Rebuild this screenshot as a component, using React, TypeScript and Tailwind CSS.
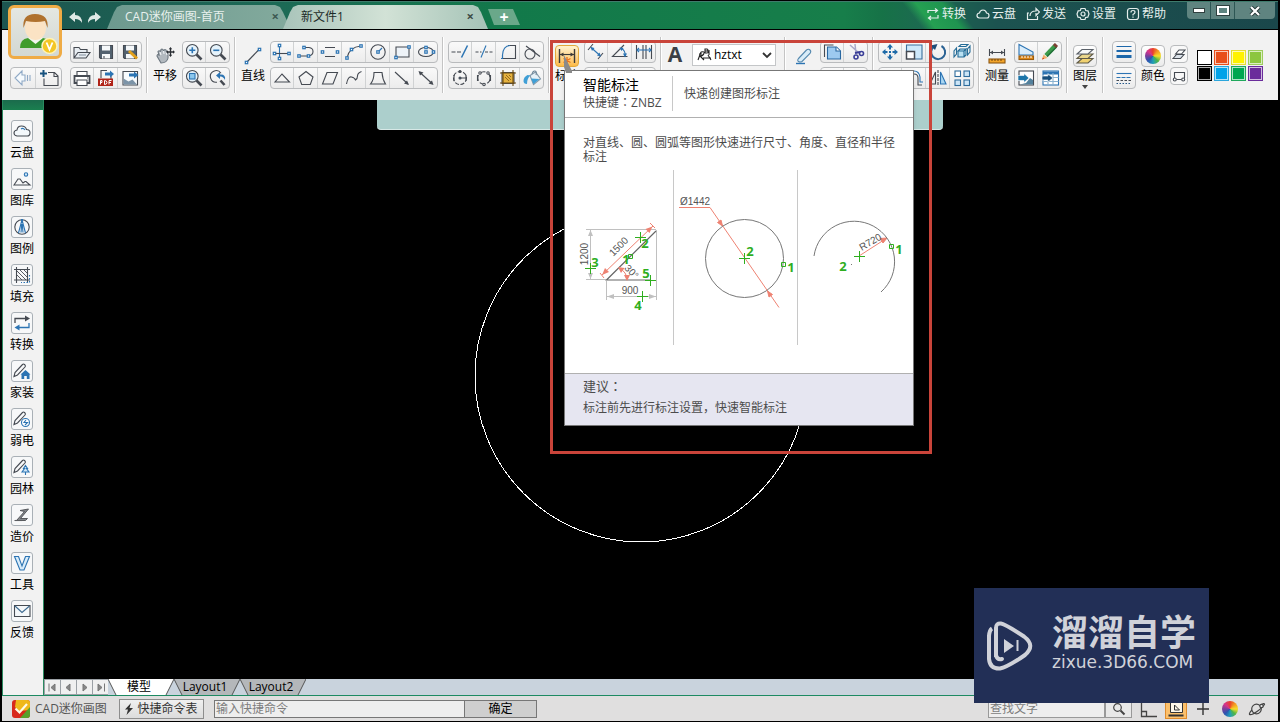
import type { ReactNode } from "react";

const D = "#454a52";
const B = "#2c74b3";
const L = "#cfe6f7";

function Svg({ w = 20, h = 18, children }: { w?: number; h?: number; children: ReactNode }) {
  return (
    <svg width={w} height={h} viewBox={`0 0 ${w} ${h}`} fill="none" stroke={D} strokeWidth="1.1" aria-hidden="true" className="block shrink-0">
      {children}
    </svg>
  );
}

function Node({ x, y }: { x: number; y: number }) {
  return <rect x={x - 1.2} y={y - 1.2} width="2.4" height="2.4" fill="#fff" stroke={B} strokeWidth="1.2" />;
}

function Lens() {
  return (
    <>
      <path d="M12.5 11.5l5 5" strokeWidth="2.6" />
      <circle cx="8.3" cy="7.3" r="5.8" fill="#e6f3fb" stroke={D} />
    </>
  );
}

const PENCIL = "M2 14.500l1-4L10.500 2.500q1-1 2 0l.5.5q.9 1 0 2L5.500 13z";

const icons: Record<string, ReactNode> = {
  back: <Svg><path d="M9 2L2 9l7 7v-4h3V6H9zM14.500 6v6M17 6v6" stroke="#8fa9c6" fill="#f6fafd" /></Svg>,
  newFile: <Svg><path d="M5 9.500v7h14V7l-3.500-3.500H9M15 3.500v4h4M6 16.500h12" fill="none" /><path d="M4.500 1v7M1 4.500h7" stroke="#17527f" strokeWidth="2" /></Svg>,
  open: <Svg><path d="M2 15V4.500h5l1.500 2H15v3M2 15l4-5.500h12L14 15z" fill="#e8edf2" /><path d="M7 12h7" stroke="#8a98a5" /></Svg>,
  save: <Svg><path d="M3.500 2.500h13v13h-12l-1-1z" fill="#52616f" /><path d="M6 2.500h8v5H6zM6 11h8v4.500H6z" fill="#f5f8fa" stroke="none" /><path d="M8 13v2.500" /></Svg>,
  saveAs: <Svg><path d="M3.500 2.500h13v13h-12l-1-1z" fill="#52616f" /><path d="M6 2.500h8v5H6zM6 11h8v4.500H6z" fill="#f5f8fa" stroke="none" /><path d="M9 8l8 7.500" stroke="#e3a11c" strokeWidth="3" /></Svg>,
  print: <Svg><path d="M5 7V2.500h10V7" fill="#fff" /><path d="M2.500 7h15v7h-15z" fill="#fff" strokeWidth="1.800" /><path d="M5 11h10v5.500H5z" fill="#fff" /><path d="M15 9h1" /></Svg>,
  pdf: <Svg><path d="M5 9V1.500h6M15 6v4" /><path d="M9 3.500h5V1.500l4 3.500-4 3.500v-2H9z" fill={B} stroke="none" /><rect x="2" y="9.500" width="15" height="7.500" fill="#b02318" stroke="none" /><path d="M4.500 15.500v-4h1.500v2H4.500M8.500 11.500v4q2.500 0 2.500-2t-2.500-2M13 15.500v-4h2.500M13 13.500h2" stroke="#fff" strokeWidth="1" /></Svg>,
  exportImg: <Svg><path d="M3 2.500h14.500v13.500H3z" fill="#f8fbfd" /><path d="M3.500 15.500v-6l5 3 4-2 4.500 5z" fill="#7c94a8" stroke="none" /><path d="M9 4.500h5V2.500l4.500 3.500L14 9.500v-2H9z" fill={B} stroke="none" /></Svg>,
  zoomIn: <Svg><Lens /><path d="M5.300 7.300h6M8.300 4.300v6" stroke={B} strokeWidth="1.600" /></Svg>,
  zoomOut: <Svg><Lens /><path d="M5.300 7.300h6" stroke={B} strokeWidth="1.600" /></Svg>,
  zoomWin: <Svg><Lens /><rect x="5.500" y="4.500" width="5.500" height="5.500" fill="#8cc8ee" stroke={B} /></Svg>,
  zoomPrev: <Svg><path d="M12.500 11.500l4 4.500" strokeWidth="2.600" /><path d="M9 13.200a5.800 5.800 0 1 1 4-9" /><path d="M17 11q1-6-5-5.500V3L8 6.500l4 3.500V7.500q3-.5 5 3.500z" fill={B} stroke="none" /></Svg>,
  cross: <Svg><path d="M7.500 2.500v13" stroke={B} /><path d="M2.500 10.500h14" /><Node x={7.5} y={2.5} /><Node x={2.5} y={10.5} /><Node x={17} y={10.5} /><Node x={7.5} y={15.5} /></Svg>,
  polyline: <Svg><path d="M8 4.500h5q4 .5 4 4t-4 4.500H3" /><Node x={8} y={4.5} /><Node x={3} y={13} /><Node x={12.5} y={13} /></Svg>,
  parallel: <Svg><path d="M5 4.500h10M5 13.500h10" /><Node x={2.5} y={9} /><Node x={17.5} y={9} /></Svg>,
  arc: <Svg><path d="M3 15Q5 4 17 3" /><Node x={3} y={15} /><Node x={7.5} y={6.5} /><Node x={17} y={3} /></Svg>,
  circle: <Svg><circle cx="10" cy="9" r="7.200" /><path d="M10 9l4-4" stroke={B} /><Node x={10} y={9} /></Svg>,
  rect: <Svg><path d="M4 4h13v10H4z" fill="#eef3f8" /><Node x={17} y={4} /><Node x={4} y={14.5} /></Svg>,
  ellipse: <Svg><ellipse cx="10" cy="9" rx="7.500" ry="4.500" /><Node x={10} y={9} /><Node x={10} y={4.5} /><Node x={17.5} y={9} /></Svg>,
  triangle: <Svg><path d="M3 13h14.500L10 5z" /></Svg>,
  pentagon: <Svg><path d="M10 2.500l7 5.500-2.700 7.500H5.700L3 8z" /></Svg>,
  parallelogram: <Svg><path d="M7 3.500h10.500L13 15H2.500z" /></Svg>,
  spline: <Svg><path d="M2.500 15Q4 7 7.500 8t4 3q2-1 2-4t4-4.500" /></Svg>,
  trapezoid: <Svg><path d="M6 3.500h8q.5 7 3.500 11.500h-15Q6 11 6 3.500z" /></Svg>,
  arrow: <Svg><path d="M3 3l13 12" /><path d="M17 16l-5-1.500 3-3z" fill={D} stroke="none" /></Svg>,
  arrows: <Svg><path d="M4 3.500l12 11" /><path d="M2.500 2l5 1.500-3.500 3zM17.500 16l-5-1.500 3.500-3z" fill={D} stroke="none" /></Svg>,
  extend: <Svg><path d="M1.500 9h10" strokeDasharray="4 1.500" /><path d="M17.500 2.500l-6 12" stroke={B} strokeWidth="1.600" /></Svg>,
  trim: <Svg><path d="M1.500 9h6M11 9h8" strokeDasharray="3 1.500" /><path d="M12 2.500l-5 12" stroke={B} /></Svg>,
  fillet: <Svg><path d="M10 2.500h7.500v13h-13V12" /><path d="M3 15.500h1.500V12Q5 3 12 2.500" stroke={B} /></Svg>,
  tangent: <Svg><circle cx="8" cy="11" r="5" /><path d="M4 3l14 10.500" /></Svg>,
  gear1: <Svg><circle cx="10" cy="9" r="6.500" strokeDasharray="4 1.500" /><path d="M10 9h6M4 6v6M16 6v6" /><circle cx="10" cy="9" r="1" fill={B} /><circle cx="10" cy="2.500" r="1" fill={D} /></Svg>,
  gear2: <Svg><circle cx="10" cy="9" r="6.200" strokeDasharray="6 2" /><path d="M3.500 6v6M16.500 6v6" /><circle cx="6" cy="4" r="1.200" fill="#fff" /><circle cx="14" cy="4" r="1.200" fill="#fff" /><circle cx="10" cy="15.500" r="1.200" fill="#fff" /></Svg>,
  hatch: <Svg><path d="M4 3.500h12v11H4z" fill="#e5b23e" /><path d="M5 1v16M15 1v16M2 4h16M2 14h16" stroke="#6b4a10" /><path d="M7 8l4 4M8 6l5 5M11 6l2 2" stroke="#8a611a" strokeWidth=".9" /></Svg>,
  bucket: <Svg><path d="M8 6.500l5.500-3.500 5 7-7 5.500z" fill="#e6f1f8" stroke="#8498a8" /><path d="M1.500 12q0-4 4-6l3 .5Q5 9 5 15q-3.500 0-3.500-3zM9 9.500l8.500.5-6 5z" fill="#3f9fd6" stroke="none" /><path d="M10 5q1-3.500 3-3t1 4" stroke="#6e879a" /></Svg>,
  dimLinear: <Svg><path d="M2.500 2v14M17.500 2v14" strokeWidth="1.400" /><path d="M3 6.500h14" stroke={B} /><path d="M3 6.500l3.500-2v4zM17 6.500l-3.500-2v4z" fill={B} stroke="none" /></Svg>,
  dimHot: <Svg><path d="M2.500 2v14M17.500 2v14" stroke="#3c3a38" strokeWidth="1.400" /><path d="M3 7.500h14" stroke="#3c3a38" /><path d="M3 7.500l3.500-2v4zM17 7.500l-3.500-2v4z" fill="#3c3a38" stroke="none" /><path d="M10 10v6M6.500 11.500l7 4M13.500 11.500l-7 4" stroke="#e9701c" strokeWidth="1.300" /></Svg>,
  dimAligned: <Svg><path d="M2 7l5-6M12 16l5-6" /><path d="M5 4.500l9 8" stroke={B} /><path d="M4.500 4l4 1-2.500 3zM15 13.500l-4-1 2.500-3z" fill={B} stroke="none" /></Svg>,
  dimAngle: <Svg><path d="M17.500 13.500h-15L14 2" /><path d="M11 5q5 3 4 8" stroke={B} /><path d="M9.500 4.500l4 .5-2 3zM15 14.500l-2-4h4z" fill={B} stroke="none" /></Svg>,
  dimChain: <Svg><path d="M2.500 2v14M9 2v14M17.500 2v14M12 2v14" /><path d="M3 7h14" stroke={B} /><path d="M5 5l-2 2 2 2M15 5l2 2-2 2" stroke={B} /></Svg>,
  eraser: <Svg><path d="M5.500 11.500l8-8.500q2-1.500 3.500 0t0 3.500L9 14.500q-2 1-3.500 0t0-3z" fill="#d8ecf8" stroke="#5488ae" /><path d="M3 16.500h9" stroke={B} strokeWidth="1.400" /></Svg>,
  copy: <Svg><path d="M2.500 14V2h9" /><path d="M5.500 4h9l4 4v8h-13z" fill="#9dcaf0" stroke="#2867a0" /><path d="M14 4v4h4" fill="#fff" stroke="#2867a0" /></Svg>,
  cut: <Svg><path d="M4 2l9 8M9 1l1 10" stroke="#a9a9c8" strokeWidth="1.500" /><circle cx="15.500" cy="10.500" r="2" stroke="#3b3f98" strokeWidth="1.600" /><circle cx="10" cy="14" r="2" stroke="#3b3f98" strokeWidth="1.600" /><path d="M9 10l5-1" stroke="#3b3f98" strokeWidth="2" /></Svg>,
  move: <Svg><path d="M10 1l3 3.500h-2v2H9v-2H7zM10 17l3-3.500h-2v-2H9v2H7zM2 9l3.500-3v2h2v2h-2v2zM18 9l-3.500-3v2h-2v2h2v2zM9 8h2v2H9z" fill="#1e6aa8" stroke="none" /></Svg>,
  scale: <Svg><path d="M2.500 9V2H18v14h-7" fill="#cde8fa" stroke="#3a6f9c" /><path d="M2.500 8.500h8v7.500h-8z" fill="#fff" strokeWidth="1.500" /></Svg>,
  rotate: <Svg><path d="M6 3.500A7 7 0 1 0 13.500 3" stroke="#2a6293" strokeWidth="2" /><path d="M2.500 2.500l7-1.500-2.500 6z" fill="#1f4d78" stroke="none" /></Svg>,
  explode: <Svg><path d="M6 8l2-2h6l-2 2zM6 8h6v6H6zM12 8l2-2v6l-2 2" fill="#b9e1f3" stroke="#256c97" /><path d="M2 14V8l2.500-3v6zM15.500 12V6L18 3v6zM7 3.500L9 1.500h7l-2 2z" stroke="#256c97" /></Svg>,
  offset: <Svg><path d="M2 16h4V9q0-4 4-4t4 4v7h4" /><path d="M4 13V8q1-6 6-6t6 6v5h3" stroke={B} /></Svg>,
  mirror: <Svg><path d="M10 1v16" strokeDasharray="3 1" /><path d="M7.500 3v12H2z" /><path d="M12.500 3v12H18z" fill="#a9d7f3" stroke={B} /></Svg>,
  array: <Svg><g fill="#cce5f7" stroke="#2e6c9c"><rect x="3" y="2" width="5.500" height="5.500" fill="#fff" /><rect x="12" y="2" width="5.500" height="5.500" /><rect x="3" y="11" width="5.500" height="5.500" /><rect x="12" y="11" width="5.500" height="5.500" /></g></Svg>,
  area: <Svg><path d="M3 11V1.500L17 9v3H3z" fill="#d9edfb" stroke={B} /><rect x="3" y="13" width="14.500" height="3.500" fill="#e08b1c" stroke="#9a5c10" /><path d="M6 13v2M9 13v2M12 13v2M15 13v2" stroke="#fff" strokeWidth="1" /></Svg>,
  pencil: <Svg><path d="M6 12.500L15 3" stroke="#3c9a4b" strokeWidth="4.500" /><path d="M7 13.500L16.500 4" stroke="#23703a" strokeWidth="1.500" /><path d="M14.500 3.500l2-2" stroke="#7b4034" strokeWidth="4.500" /><path d="M2 16.500l1.500-5 4 3.500z" fill="#f1b069" stroke="none" /><path d="M2 16.500l1-2 1.200 1.200z" fill="#d43318" stroke="none" /></Svg>,
  insertImg: <Svg><rect x="3" y="2" width="14.500" height="14" fill="#fff" /><path d="M10 14l4-5 3 2v4.500H4z" fill="#52809c" stroke="none" /><path d="M2 6.500h6v-2L13 9l-5 4.500v-2H2z" fill="#1d76aa" stroke="#fff" strokeWidth=".6" /></Svg>,
  insertTable: <Svg><rect x="3" y="2" width="15.500" height="14" fill="#fff" stroke={B} /><path d="M3 4h15.500" stroke={B} strokeWidth="3" /><path d="M3 8.500h15.500M3 12.500h15.500M8 4v12M13 4v12" stroke="#8ab2d0" /><path d="M2 7h6V5l5 4-5 4v-2H2z" fill="#174f7c" stroke="#fff" strokeWidth=".6" /></Svg>,
  lineWidth: <Svg><path d="M2.500 3.500h15" stroke="#1c67aa" strokeWidth="1" /><path d="M2.500 8h15" stroke="#1c67aa" strokeWidth="2" /><path d="M2.500 13.500h15" stroke="#1c67aa" strokeWidth="3" /></Svg>,
  lineType: <Svg><path d="M2.500 4.500h15" stroke={B} /><path d="M2.500 8.500h15" strokeDasharray="4 1" stroke={B} /><path d="M2.500 11.500h15" strokeDasharray="2.500 1.500" /><path d="M2.500 14.500h15" strokeDasharray="1.500 1.500" stroke="#285a8a" /></Svg>,
  hand: <Svg><path d="M6 16l-4-7q0-2 2-1L3 4.500Q4 3 5.500 4.500L6 2.500q1.500-1 2.500 1l1.500-1q1.500 0 1.500 2l1.500 1.500V11q-1 5-7 5z" fill="#b2b9bf" stroke="#6d7780" /><path d="M6 8l-1-3M9 7L8.500 4M12 8l-1-3" stroke="#eef1f4" /><path d="M15.500 2v6M12.500 5h6" stroke="#2b2f35" strokeWidth="1.300" /><path d="M15.500 0l1.700 2.200h-3.400zM15.500 10l1.700-2.200h-3.400zM20 5l-2-1.700v3.400zM11 5l2-1.700v3.400z" fill="#2b2f35" stroke="none" /></Svg>,
  line: <Svg><path d="M3.500 15.500L16 2.500" /><Node x={3.5} y={15.5} /><Node x={16.5} y={2.5} /></Svg>,
  measure: <Svg><path d="M2.500 2v7M17.500 2v7M3 5.500h14" /><path d="M3 5.500l3-2v4zM17 5.500l-3-2v4z" fill={D} stroke="none" /><rect x="2" y="12" width="16" height="4" fill="#f2a42a" stroke="#8f5812" /><path d="M5 12v2M8 12v2M11 12v2M14 12v2" stroke="#70420a" strokeWidth="1" /></Svg>,
  layers: <Svg><path d="M2 16l5-4.500h11L13 16z" fill="#f0d170" stroke="#5f5a48" /><path d="M2 11.500L7 7h11l-5 4.500z" fill="#ead68c" stroke="#5f5a48" /><path d="M2 7l5-4.500h11L13 7z" fill="#f8f9fa" stroke="#5a6068" /></Svg>,
  smallLayers: <Svg w={14} h={14}><path d="M1 11.500l3.500-4H12l-3.500 4z" fill="#dce3ea" /><path d="M3.500 7L7 3h6L9.500 7z" fill="#fff" /></Svg>,
  smallShape: <Svg w={14} h={14}><path d="M2.500 9V3.500h10V9M4.500 10.500h5" /><circle cx="2.800" cy="10.500" r="1.500" fill="#fff" /><circle cx="11.200" cy="10.500" r="1.500" fill="#fff" /></Svg>,
  cloud: <Svg><path d="M5 14q-3-.5-3-3t3-3q.5-4 4.500-4t5 3.500q3.500 0 3.500 3.300T15 14z" fill="#f3f8fb" /><path d="M9 7q2-1.500 4 1" stroke={B} /></Svg>,
  gallery: <Svg><path d="M2 15l4-6h2l3 4 2-1.500h1L18 15z" /><circle cx="14" cy="4.500" r="1.700" stroke={B} fill={L} /></Svg>,
  legend: <Svg><circle cx="10" cy="9" r="7.200" /><path d="M6.500 15L9.700 3M13.500 15L10.300 3M9 14.500L9.800 6M11 14.500L10.200 6M9.500 1.500h1v2h-1z" stroke={B} /></Svg>,
  fill: <Svg><path d="M4.500 1v16M15.500 1v16M2 3.500h16M2 14h16" /><path d="M5 5l9 9M8 4l7 7M5 9l5 5M12 4l3 3" strokeWidth=".9" /><path d="M17.500 9v7.500H9" stroke={B} strokeDasharray="1.500 1.500" /></Svg>,
  convert: <Svg><path d="M3 9V4.500h11" strokeWidth="1.300" /><path d="M18 4.500l-5-3v6z" fill={D} stroke="none" /><path d="M17 9v4.500H7" stroke={B} strokeWidth="1.300" /><path d="M2.500 13.500l5-3v6z" fill={B} stroke="none" /></Svg>,
  home: <Svg><path d={PENCIL} /><path d="M8.500 12.500L13.500 8l5 4.500h-1V17h-2.700v-3h-2.600v3H9.500v-4.500z" fill={B} stroke="none" /></Svg>,
  power: <Svg><path d={PENCIL} /><circle cx="13.500" cy="12.500" r="4" fill="#fff" stroke={B} /><path d="M14 10l-2 2.500h3.500L13 15" stroke={B} /></Svg>,
  garden: <Svg><path d={PENCIL} /><path d="M13.500 7.500l2 3h-1l2.500 3.500h-7l2.500-3.500h-1zM13.500 14v3" stroke={B} fill={L} /></Svg>,
  cost: <Svg><path d="M8 4.500L16.500 3 8.500 12.500h7l-2 2H4.500l8-9z" fill="#85888c" stroke="#4c4e52" strokeWidth=".9" /><path d="M2.500 14.500h8" stroke="#5a5c60" /></Svg>,
  tools: <Svg><path d="M2.500 2.500h4L10 12l3.500-9.500h4L12 16H8z" fill="#d8ecfa" stroke={B} /></Svg>,
  mail: <Svg><path d="M2.500 3.500h15.500v11H2.500z" fill="#f4f7f9" /><path d="M3 4l7 6.500L17.500 4" stroke="#3d6b91" /></Svg>,
};

function Cells({ rows, wide = false }: { rows: [string, string][][]; wide?: boolean }) {
  return (
    <div className="flex shrink-0 flex-col gap-1">
      {rows.map((row, i) => (
        <div key={i} className="flex divide-x divide-[#d0d2d3] rounded-sm bg-gradient-to-b from-[#fafafa] to-[#ebebeb] outline outline-1 -outline-offset-1 outline-[#b9bbbd]">
          {row.map(([icon, label]) => (
            <button key={icon} type="button" aria-label={label} className={wide ? "flex h-[22px] w-[26px] items-center justify-center" : "flex h-[22px] w-6 items-center justify-center"}>
              {icons[icon]}
            </button>
          ))}
        </div>
      ))}
    </div>
  );
}

function Sep() {
  return <div className="-my-1 w-[2px] shrink-0 self-stretch border-l border-[#c4c4c4] bg-white" />;
}

function Big({ icon, label, look = "plain", arrow = false, iconOnly = false }: { icon: ReactNode; label: string; look?: "plain" | "box" | "hot"; arrow?: boolean; iconOnly?: boolean }) {
  const looks = {
    plain: "flex h-[22px] w-6 items-center justify-center",
    box: "flex h-[22px] w-6 items-center justify-center rounded-sm border border-[#b9bbbd] bg-gradient-to-b from-white to-[#ebebeb]",
    hot: "flex h-[22px] w-6 items-center justify-center rounded-sm border border-[#e2a93c] bg-gradient-to-b from-[#fff3cf] to-[#fdbb45]",
  };
  return (
    <button type="button" aria-label={label} className="flex w-[26px] shrink-0 flex-col items-center pt-1 text-black">
      <span className={looks[look]}>{icon}</span>
      {!iconOnly && <span className="text-xs leading-[18px] whitespace-nowrap">{label}</span>}
      {arrow && <svg width="6" height="4" className="block" aria-hidden="true"><path d="M0 0h6L3 4z" fill="#444" /></svg>}
    </button>
  );
}

function ColorWheel() {
  return <span className="block h-4 w-4 rounded-full bg-[conic-gradient(#e8402c,#f59a23,#f5df2b,#4fb54a,#1f9fb8,#2b56b0,#7a3f9c,#d8348a,#e8402c)]" />;
}

const titleActions: [string, ReactNode][] = [
  ["转换", <path key="p" d="M2 6V3.500h9M9 1.500l2.500 2L9 5.500M12 8v3H3M5 9L2.500 11 5 13" />],
  ["云盘", <path key="p" d="M3.500 11q-2.500-.3-2.500-2.500T3.500 6Q4 3 7 3t3.500 3q2.500 0 2.500 2.500T11 11z" />],
  ["发送", <path key="p" d="M3 6H1.500v6.500h10V9M4 9q0-5 6-5V1.500L13.500 5 10 8.500V6" />],
  ["设置", <g key="p"><path d="M5 1.500h4l.8 2 2.200.3L13 7l-1.200 3.200-2.200.3-.6 2H5l-.8-2-2.200-.3L1 7l1.200-3.200 2.200-.3z" /><circle cx="7" cy="7" r="2" /></g>],
  ["帮助", <g key="p"><rect x="1.500" y="1.500" width="11" height="11" rx="2.500" /><path d="M5 5.500Q5 3.500 7 3.500t2 1.800Q9 6.500 7 7.500v1M7 9.500v1.300" /></g>],
];

const sideItems: [string, string][] = [
  ["cloud", "云盘"], ["gallery", "图库"], ["legend", "图例"], ["fill", "填充"], ["convert", "转换"], ["home", "家装"],
  ["power", "弱电"], ["garden", "园林"], ["cost", "造价"], ["tools", "工具"], ["mail", "反馈"],
];

const swatches: [string, string][] = [
  ["白", "bg-white border-black"], ["红", "bg-[#e84e1b] border-[#e84e1b]"], ["黄", "bg-[#fff200] border-[#e6dc30]"], ["浅绿", "bg-[#8cc63f] border-[#9ccc5c]"],
  ["黑", "bg-black border-black"], ["蓝", "bg-[#00a2e8] border-[#2ba6dc]"], ["绿", "bg-[#00a651] border-[#1fa85c]"], ["紫", "bg-[#6a2c9b] border-[#6a2c9b]"],
];

function Avatar() {
  return (
    <button type="button" aria-label="用户" className="absolute top-1 left-[6px] z-10 h-[54px] w-[54px] rounded-md border-[3px] border-[#efab45] bg-gradient-to-b from-[#e4e7e2] to-[#d3d8d2]">
      <svg viewBox="0 0 48 48" className="block h-full w-full" aria-hidden="true">
        <path d="M9 40q0-9 8-10h15q8 1 8 10z" fill="#3f9c2c" />
        <path d="M17 30l7.500 6 7.500-6-3-2h-9z" fill="#f3f6ef" />
        <ellipse cx="24.500" cy="20" rx="10.500" ry="12" fill="#fbe3c4" />
        <path d="M12.500 20Q11 6 24 6q14 0 12.500 14l-2.500-7q-9 2-19 0z" fill="#b0722e" />
        <circle cx="38.500" cy="38" r="7.500" fill="#f3c626" stroke="#fff3b8" strokeWidth="1.500" />
        <path d="M35.500 34.500l3 7 3-7" fill="none" stroke="#fff" strokeWidth="1.800" />
      </svg>
    </button>
  );
}

function TitleBar() {
  return (
    <header className="flex h-[29px] shrink-0 items-end border-t border-b border-t-[#3f7b6c] border-b-black bg-[linear-gradient(52deg,transparent_0_71%,#25a052_72%,#1f9450_74%,transparent_75%),linear-gradient(90deg,#1d5550_0%,#1c6a55_22%,#12794a_40%,#177e4a_66%,#167247_69%,#1c6a50_72%,#1c5350_78%,#1a474b_100%)] pl-[66px]">
      <div className="flex h-full items-center gap-1 pt-1">
        <button type="button" aria-label="撤销"><svg width="15" height="14" className="block" aria-hidden="true"><path d="M1 6l6-5v3q7 0 7 8-2-4-7-4v3z" fill="#dfe9e6" /></svg></button>
        <button type="button" aria-label="重做"><svg width="15" height="14" className="block" aria-hidden="true"><path d="M14 6L8 1v3Q1 4 1 12q2-4 7-4v3z" fill="#dfe9e6" /></svg></button>
      </div>
      <nav className="ml-[5px] flex h-6 items-stretch">
        <a href="#home" className="flex w-[184px] items-center justify-between bg-gradient-to-r from-[#6d9a8f] to-[#83aa9d] pr-3 pl-[18px] text-xs whitespace-nowrap text-[#e8f1ee] [clip-path:polygon(0_100%,7px_30%,10px_8%,15px_0,168px_0,173px_8%,176px_30%,184px_100%)]">
          CAD迷你画图-首页
          <span className="text-[13px] font-bold text-[#3c5952]">×</span>
        </a>
        <a href="#file" className="-ml-2 flex w-[205px] items-center justify-between bg-gradient-to-r from-[#a9c4ba] via-[#d2e2d6] to-[#a5c3b7] pr-[14px] pl-[18px] text-xs whitespace-nowrap text-[#1d2b28] [clip-path:polygon(0_100%,7px_30%,10px_8%,15px_0,190px_0,195px_8%,198px_30%,205px_100%)]">
          新文件1
          <span className="text-[13px] font-bold text-[#3c4b46]">×</span>
        </a>
        <button type="button" aria-label="新建" className="mt-1 mb-1 flex w-8 items-center justify-center bg-[#6aa88a] pb-px text-base leading-none font-bold text-white [clip-path:polygon(0_0,25px_0,100%_100%,6px_100%)]">
          +
        </button>
      </nav>
      <div className="ml-auto flex h-full items-center gap-[10px] pb-1">
        {titleActions.map(([label, shape]) => (
          <button key={label} type="button" className="flex items-center gap-0.5 text-xs text-[#e4eeec]">
            <svg width="14" height="14" viewBox="0 0 14 14" fill="none" stroke="#e4eeec" strokeWidth="1.200" aria-hidden="true">{shape}</svg>
            {label}
          </button>
        ))}
      </div>
      <div className="mr-[3px] ml-[21px] flex h-[17px] divide-x divide-[#2d5654] self-start rounded-b bg-[#5f8480]">
        <button type="button" aria-label="最小化" className="flex w-6 items-center justify-center"><span className="h-[5px] w-3 border border-[#30403f] bg-white" /></button>
        <button type="button" aria-label="最大化" className="flex w-6 items-center justify-center"><span className="h-[9px] w-3 border-2 border-white outline outline-1 outline-[#30403f]" /></button>
        <button type="button" aria-label="关闭" className="flex w-10 items-center justify-center"><svg width="12" height="10" aria-hidden="true"><path d="M2 1l8 8M10 1L2 9" stroke="#263636" strokeWidth="4" /><path d="M2 1l8 8M10 1L2 9" stroke="#fff" strokeWidth="2.200" /></svg></button>
      </div>
    </header>
  );
}

function Toolbar() {
  return (
    <div className="flex h-[70px] shrink-0 gap-1 overflow-hidden bg-[#f2f2f2] pt-[11px] pb-[11px] pl-2">
      <div className="mr-1 flex items-end"><Cells wide rows={[[["back", "返回"], ["newFile", "新建"]]]} /></div>
      <Cells rows={[[["open", "打开"], ["save", "保存"], ["saveAs", "另存为"]], [["print", "打印"], ["pdf", "输出 PDF"], ["exportImg", "输出图片"]]]} />
      <Sep />
      <Big icon={icons.hand} label="平移" />
      <Cells rows={[[["zoomIn", "放大"], ["zoomOut", "缩小"]], [["zoomWin", "窗口缩放"], ["zoomPrev", "上一视图"]]]} />
      <Sep />
      <Big icon={icons.line} label="直线" />
      <Cells
        rows={[
          [["cross", "构造线"], ["polyline", "多段线"], ["parallel", "双线"], ["arc", "圆弧"], ["circle", "圆"], ["rect", "矩形"], ["ellipse", "椭圆"]],
          [["triangle", "三角形"], ["pentagon", "多边形"], ["parallelogram", "平行四边形"], ["spline", "样条线"], ["trapezoid", "梯形"], ["arrow", "箭头"], ["arrows", "双箭头"]],
        ]}
      />
      <Sep />
      <Cells rows={[[["extend", "延伸"], ["trim", "修剪"], ["fillet", "圆角"], ["tangent", "切线"]], [["gear1", "等分"], ["gear2", "测量点"], ["hatch", "填充"], ["bucket", "油漆桶"]]]} />
      <Sep />
      <Big icon={icons.dimHot} label="标注" look="hot" />
      <Cells rows={[[["dimAligned", "对齐标注"], ["dimAngle", "角度标注"], ["dimChain", "连续标注"]], [["gear1", "直径"], ["dimLinear", "线性"], ["arc", "弧长"]]]} />
      <Sep />
      <button type="button" aria-label="文字" className="w-[22px] shrink-0 self-start pt-px pr-1 text-[21px] leading-6 font-bold text-[#3c4046]">A</button>
      <div className="mr-1 flex w-[84px] shrink-0 flex-col gap-1 pt-[3px]">
        <div className="flex h-[22px] items-center border border-[#c4c6c8] bg-white pl-1">
          <svg width="15" height="14" viewBox="0 0 15 14" fill="none" stroke="#222" strokeWidth="1.100" aria-hidden="true">
            <path d="M1 12l3-8M4 4q4-1 3 1.500T3 8l4 4M2 6h3M8 5V1h2q2 1 0 2H8M10 3q3 1 0 2H8M12 2v5M6 10h8M11 7l3 5" />
          </svg>
          <select aria-label="字体" className="h-full min-w-0 flex-1 appearance-none bg-transparent pl-0.5 text-xs leading-5 text-black"><option>hztxt</option></select>
          <svg width="15" height="10" viewBox="0 0 15 10" aria-hidden="true"><path d="M3 3l4 4 4-4" fill="none" stroke="#333" strokeWidth="1.800" /></svg>
        </div>
        <div className="h-[22px] border border-[#c4c6c8] bg-white" />
      </div>
      <Sep />
      <Big icon={icons.eraser} label="删除" iconOnly />
      <Cells rows={[[["copy", "复制"], ["cut", "剪切"]], [["open", "粘贴"], ["save", "块"]]]} />
      <Sep />
      <Cells rows={[[["move", "移动"], ["scale", "缩放"], ["rotate", "旋转"], ["explode", "分解"]], [["fillet", "倒角"], ["offset", "偏移"], ["mirror", "镜像"], ["array", "阵列"]]]} />
      <Sep />
      <Big icon={icons.measure} label="测量" />
      <Cells rows={[[["area", "面积"], ["pencil", "画笔"]], [["insertImg", "插入图片"], ["insertTable", "插入表格"]]]} />
      <Sep />
      <Big icon={icons.layers} label="图层" look="box" arrow />
      <Sep />
      <div className="ml-1"><Cells rows={[[["lineWidth", "线宽"]], [["lineType", "线型"]]]} /></div>
      <Big icon={<ColorWheel />} label="颜色" look="box" />
      <div className="flex shrink-0 flex-col gap-1 pt-1">
        {[["smallLayers", "随层"], ["smallShape", "随块"]].map(([icon, label]) => (
          <button key={icon} type="button" aria-label={label} className="flex h-[18px] w-[18px] items-center justify-center rounded-sm border border-[#b9bbbd] bg-[#f8f8f8]">{icons[icon]}</button>
        ))}
      </div>
      <div className="ml-[5px] grid shrink-0 grid-cols-[repeat(4,15px)] grid-rows-[repeat(2,15px)] gap-x-0.5 gap-y-px self-start pt-[9px]">
        {swatches.map(([label, color]) => (
          <button key={label} type="button" aria-label={label} className={"border shadow-[inset_0_0_0_1px_#ffffffb0] " + color} />
        ))}
      </div>
    </div>
  );
}

function Cross({ x, y }: { x: number; y: number }) {
  return <path d={`M${x - 5} ${y + 0.5}h11M${x + 0.5} ${y - 5}v11`} stroke="#2fae1f" />;
}

function Num({ x, y, n }: { x: number; y: number; n: string }) {
  return <text x={x} y={y} textAnchor="middle" className="fill-[#2fae1f] text-[13px] font-bold" stroke="none" dominantBaseline="central">{n}</text>;
}

function DimensionDrawings() {
  const red = "#ee8272";
  const gray = "#c0c0c0";
  return (
    <svg viewBox="565 169 348 175" className="block w-full" fill="none" strokeWidth="1" aria-hidden="true" fontFamily="'Open Sans', sans-serif">
      <path d="M673.500 169v175M797.500 169v175" stroke="#c8c8c8" />
      <g stroke={gray}>
        <path d="M586 228.500h70M590.500 229v49M586 278.500h20M656.500 229v70M606.500 280v19M607 295.500h49" />
        <path d="M590.500 229l-2.500 6h5zM590.500 278l-2.500-6h5zM607 295.500l7-2.500v5zM656 295.500l-7-2.500v5z" fill={gray} stroke="none" />
      </g>
      <path d="M656 230l-49.500 49H650" stroke="#666" strokeWidth="1.200" />
      <g stroke={red}>
        <path d="M602 274l51-49M600 272l4 5M650 222l5 5M619 267q8 4 8 12" />
        <path d="M602 274l3-7 4 4zM652.500 225.500l-7 2.500 4 4zM618 266l6.500 1-3.500 5zM627 280l-3-6h6z" fill={red} stroke="none" />
        <path d="M679 206.500h31l69 100" />
        <path d="M722.500 225l-5-3.500 3.500-2.500zM767.500 290l5 3.500-3.500 2.500zM887 237l-4 5-3-4.500z" fill={red} />
        <path d="M859 255l28-18" />
      </g>
      <circle cx="744.500" cy="257.500" r="39" stroke="#777" />
      <path d="M814 255A40.500 40.500 0 1 1 881 291" stroke="#777" />
      <g className="fill-[#555] text-[10px]" textAnchor="middle" fontFamily="'Liberation Sans', sans-serif">
        <text transform="translate(588 253) rotate(-90)">1200</text>
        <text transform="translate(621 248) rotate(-45)">1500</text>
        <text transform="translate(629 273) rotate(47)">30°</text>
        <text x="630" y="293">900</text>
        <text x="695" y="204">Ø1442</text>
        <text transform="translate(872 244) rotate(-30)">R720</text>
      </g>
      <Cross x={640} y={236} /><Cross x={590} y={267} /><Cross x={650} y={279} /><Cross x={642} y={295} /><Cross x={744} y={257} /><Cross x={859} y={255} />
      <path d="M628.500 253.500h4v4h-4zM781.500 261.500h4v4h-4zM889.500 243.500h4v4h-4z" stroke="#2fae1f" />
      <Num x={645} y={242} n="2" /><Num x={626} y={258} n="1" /><Num x={595} y={261} n="3" /><Num x={646} y={272} n="5" /><Num x={638} y={304} n="4" />
      <Num x={750} y={250} n="2" /><Num x={791} y={266} n="1" /><Num x={843} y={265} n="2" /><Num x={899} y={248} n="1" />
      <path d="M851 263.500h1" stroke="#777" />
    </svg>
  );
}

function Colon() {
  return <span className="font-['Noto_Sans_CJK_JP',sans-serif]">：</span>;
}

function DimensionTooltip() {
  return (
    <section className="absolute top-[69px] left-[562px] z-20 w-[350px] border border-[#777] bg-white text-xs text-[#4c4c4c] shadow-md">
      <svg width="12" height="18" className="absolute -top-[16px] -left-1" aria-hidden="true"><path d="M3 0l8 16v2H5L3 12z" fill="#8a8a8a" /></svg>
      <div className="flex items-center border-b border-[#b0b0b0] pt-[5px] pb-[6px] pl-[18px]">
        <div className="flex w-[90px] flex-col border-r border-[#c8c8c8]">
          <h2 className="text-sm leading-[18px] text-black">智能标注</h2>
          <p className="leading-4 whitespace-nowrap">快捷键<Colon />ZNBZ</p>
        </div>
        <p className="pl-[11px]">快速创建图形标注</p>
      </div>
      <p className="px-[18px] pt-[18px] pb-[6px] leading-[14px]">对直线、圆、圆弧等图形快速进行尺寸、角度、直径和半径标注</p>
      <DimensionDrawings />
      <footer className="mt-7 border-t border-[#b0b0b0] bg-[#e6e6f1] px-[18px] pt-px pb-[6px]">
        <h3 className="text-[13px] leading-[22px]">建议<Colon /></h3>
        <p className="leading-[22px]">标注前先进行标注设置，快速智能标注</p>
      </footer>
    </section>
  );
}

function LayoutTab({ label, active = false }: { label: string; active?: boolean }) {
  return (
    <a href={"#" + label} className="relative flex w-[66px] justify-center pr-1">
      <svg width="66" height="16" className="absolute inset-0" aria-hidden="true">
        <path d="M0 0h66l-8 16H8z" fill={active ? "#ffffff" : "#b4b7ba"} />
        <path d="M0 0l8 16M66 0l-8 16" stroke="#555" fill="none" />
      </svg>
      <span className="relative">{label}</span>
    </a>
  );
}

function LayoutTabs() {
  return (
    <div className="flex h-4 shrink-0 bg-[#c9d3dd] text-xs leading-4 text-black">
      <div className="flex gap-px bg-[#9ba0a5] p-px pr-0">
        {[["首个", "M3 2.500v8M9 3L5 6.500l4 3.500z"], ["上一个", "M8 3L4 6.500 8 10z"], ["下一个", "M5 3l4 3.500L5 10z"], ["末个", "M4 3l4 3.500L4 10zM10.500 2.500v8"]].map(([label, d]) => (
          <button key={label} type="button" aria-label={label} className="flex w-[15px] items-center justify-center bg-[#f0f0f0]">
            <svg width="13" height="13" aria-hidden="true"><path d={d} fill="#888" stroke="#777" /></svg>
          </button>
        ))}
      </div>
      <LayoutTab label="模型" active />
      <LayoutTab label="Layout1" />
      <LayoutTab label="Layout2" />
    </div>
  );
}

function StatusBar() {
  return (
    <footer className="flex h-[25px] shrink-0 items-center bg-[#e0dfdf] pr-[10px] pl-[10px] text-xs text-[#555]">
      <svg width="18" height="18" viewBox="0 0 18 18" aria-hidden="true">
        <rect width="18" height="18" rx="3" fill="#d8291c" />
        <path d="M4 0h11q3 0 3 3v7L7 11 3 7z" fill="#efb81a" />
        <path d="M8 18h7q3 0 3-3V7z" fill="#58a02b" />
        <path d="M3.500 8.500l4 4L15 4" fill="none" stroke="#fffbe8" strokeWidth="2.200" />
      </svg>
      <span className="ml-[5px] w-[84px] whitespace-nowrap">CAD迷你画图</span>
      <button type="button" className="flex h-5 w-[85px] items-center justify-center gap-1 border border-[#8d8d8d] bg-gradient-to-b from-[#f0f0f0] to-[#dcdcdc] whitespace-nowrap text-[#333]">
        <svg width="8" height="12" aria-hidden="true"><path d="M6 0L0 6.500h3L1.500 12 8 5H4.500z" fill="#333" /></svg>
        快捷命令表
      </button>
      <input aria-label="输入快捷命令" placeholder="输入快捷命令" className="ml-[10px] h-[18px] w-[250px] border border-r-0 border-[#777] bg-[#eee] pl-px text-xs placeholder:text-[#7d7d7d]" />
      <button type="button" className="h-[18px] w-[73px] border border-[#777] bg-[#cfcfcf] leading-4 text-black">确定</button>
      <div className="ml-auto flex items-center">
        <input aria-label="查找文字" placeholder="查找文字" className="h-[18px] w-[117px] border border-[#999] bg-[#eee] pl-px text-xs placeholder:text-[#7d7d7d]" />
        <button type="button" aria-label="查找" className="flex h-[18px] w-[27px] items-center justify-center border border-[#999] bg-[#e8e8e8]">
          <svg width="14" height="14" fill="none" stroke="#444" aria-hidden="true"><circle cx="5.500" cy="5.500" r="3.800" strokeWidth="1.200" /><path d="M8.500 8.500l4 4" strokeWidth="2" /></svg>
        </button>
        <div className="ml-[6px] flex items-center gap-[5px]">
          <button type="button" aria-label="正交" className="flex w-[22px] justify-center"><svg width="18" height="18" fill="none" stroke="#444" strokeWidth="1.300" aria-hidden="true"><path d="M1.500 1v15.500H17M1.500 11.500h5v5" /></svg></button>
          <button type="button" aria-label="捕捉" className="flex h-5 w-[22px] items-center justify-center border border-[#e08c2c] bg-[#fbc06c]"><svg width="18" height="18" fill="none" stroke="#333" aria-hidden="true"><path d="M3.500 1v11.500h12V1" fill="#fff8ea" /><path d="M7.500 5v5h5z" /><path d="M1.500 15.500h15" strokeWidth="2" /></svg></button>
          <button type="button" aria-label="十字" className="flex w-[22px] justify-center"><svg width="14" height="14" stroke="#333" strokeWidth="1.400" aria-hidden="true"><path d="M1 7h12M7 1v12" /></svg></button>
          <button type="button" aria-label="颜色" className="flex w-[22px] justify-center"><ColorWheel /></button>
          <button type="button" aria-label="轨道" className="flex w-[22px] justify-center"><svg width="18" height="16" fill="none" stroke="#444" strokeWidth="1.200" aria-hidden="true"><circle cx="8.500" cy="8" r="4.800" /><path d="M4 9q-3 3-2.500 4.500 2 1 7.500-3T16.500 3.500q0-2-4 .5" /><circle cx="13.500" cy="5" r="1.700" fill="#eee" /></svg></button>
        </div>
      </div>
    </footer>
  );
}

export default function App() {
  return (
    <div className="relative flex h-screen min-h-[640px] flex-col overflow-hidden border-x-2 border-t border-b border-black bg-black font-['Open_Sans','Noto_Sans_CJK_SC',sans-serif]">
      <TitleBar />
      <Toolbar />
      <Avatar />
      <div className="flex min-h-0 flex-1">
        <aside className="w-[42px] shrink-0 border-x border-[#2a8a60] bg-[#f2f2f2]">
          <div className="h-[10px] bg-gradient-to-b from-[#1b6b4c] to-[#1a7f4f]" />
          <nav className="flex flex-col items-center gap-1 pt-[10px] pr-0.5">
            {sideItems.map(([icon, label]) => (
              <a key={icon} href={"#" + icon} className="flex h-11 flex-col items-center text-xs text-black">
                <span className="flex h-[22px] w-[22px] items-center justify-center rounded-[3px] border border-[#a9b0b6] bg-[#f7f8f9]">{icons[icon]}</span>
                <span className="leading-[22px]">{label}</span>
              </a>
            ))}
          </nav>
        </aside>
        <main className="flex min-w-0 flex-1 flex-col">
          <div className="relative min-h-0 flex-1 bg-black">
            <div className="pr-0.5">
              <div className="mx-auto h-[30px] w-[566px] rounded-b-sm border-b border-[#d7e8e6] bg-[#accfcc]" />
            </div>
            <svg width="334" height="334" className="absolute top-[109px] left-[430px]" aria-hidden="true" shapeRendering="crispEdges">
              <circle cx="167" cy="167" r="166" fill="none" stroke="#fff" />
            </svg>
          </div>
          <LayoutTabs />
        </main>
      </div>
      <div className="h-px shrink-0 bg-[#1d8a62]" />
      <StatusBar />
      <DimensionTooltip />
      <div className="pointer-events-none absolute top-[39px] left-[548px] z-30 h-[414px] w-[382px] border-[3px] border-[#c9443a]" />
      <aside className="absolute right-[69px] bottom-[18px] z-30 flex h-[115px] w-[235px] items-center gap-[18px] bg-[#222f56] pl-[12px] text-[#d0d2d9]">
        <svg width="48" height="50" viewBox="0 0 48 50" fill="none" stroke="#d0d2d9" aria-hidden="true">
          <path d="M10 36V7q0-5 5-4.500 4 .5 23 13 12 9 1 18.500Q22 46 14 47.500 4 48 3 38V15q.5-6 3-7.500" strokeWidth="4" />
          <path d="M10 34q1 5 6 4" strokeWidth="4" strokeLinecap="round" />
          <path d="M18 18l10 7-10 7z" fill="#d0d2d9" stroke="none" />
          <path d="M31.500 19v11" strokeWidth="2" />
        </svg>
        <div className="pb-1">
          <p className="text-4xl leading-[36px] font-bold whitespace-nowrap">溜溜自学</p>
          <p className="font-['DejaVu_Sans',sans-serif] text-[17px] leading-[22px] whitespace-nowrap">zixue.3D66.COM</p>
        </div>
      </aside>
    </div>
  );
}
